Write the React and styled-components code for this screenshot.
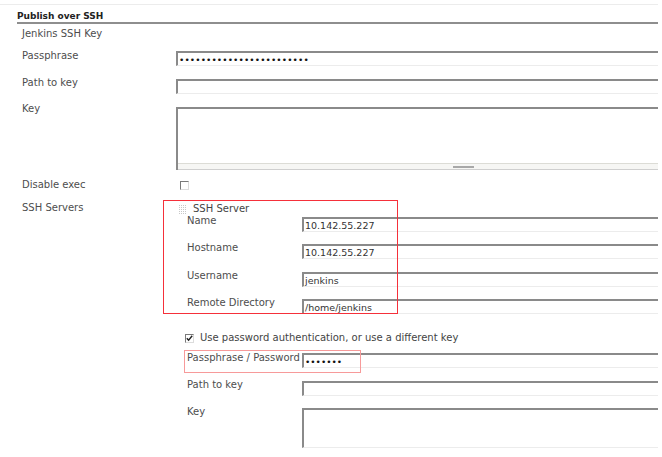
import React from "react";
import styled, { createGlobalStyle } from "styled-components";

const Global = createGlobalStyle`
  html, body { margin: 0; padding: 0; background: #fff; }
  body { font-family: "DejaVu Sans", Verdana, sans-serif; font-size: 10px; color: #444; }
`;

const Page = styled.div`
  position: relative;
  width: 662px;
  height: 457px;
  overflow: hidden;
  padding-top: 4px;
  box-sizing: border-box;
`;

const TopRule = styled.div`
  height: 1px;
  width: 658px;
  background: #ececec;
`;

const SectionTitle = styled.div`
  margin: 5px 4px 0 17px;
  height: 12px;
  line-height: 12px;
  font-size: 9px;
  font-weight: bold;
  color: #222;
  border-bottom: 2px solid #8e8e8e;
`;

const Form = styled.div`
  display: flex;
  flex-direction: column;
  padding-left: 22px;
  padding-right: 4px;
`;

const Row = styled.div`
  display: flex;
  align-items: flex-start;
  margin-top: ${(p) => p.$mt}px;
`;

const Label = styled.div`
  flex: 0 0 ${(p) => p.$w || 154}px;
  line-height: 12px;
  margin-top: ${(p) => p.$dy || 0}px;
  color: #4d4d4d;
  white-space: nowrap;
`;

const Field = styled.div`
  flex: 1;
  min-width: 0;
`;

const TextBox = styled.div`
  height: 15px;
  box-sizing: border-box;
  border-top: 2px solid #8a8a8a;
  border-left: 2px solid #8a8a8a;
  border-bottom: 1px solid #ececec;
  background: #fff;
  padding-left: 1px;
  line-height: 13px;
  font-size: 9.5px;
  color: #333;
  white-space: nowrap;
  overflow: hidden;
`;

const Dots = styled.span`
  font-size: 9px;
  letter-spacing: ${(p) => p.$ls}px;
  color: #111;
`;

const Area = styled.div`
  height: ${(p) => p.$h}px;
  box-sizing: border-box;
  border-top: 2px solid #8a8a8a;
  border-left: 2px solid #8a8a8a;
  border-bottom: ${(p) => (p.$scroll ? "none" : "1px solid #ececec")};
  display: flex;
  flex-direction: column;
  justify-content: flex-end;
`;

const ScrollStrip = styled.div`
  height: 7px;
  box-sizing: border-box;
  border-top: 1px solid #dcdcd6;
  border-bottom: 1px solid #cfcfcf;
  background: #f6f6f4;
  display: flex;
  align-items: center;
  padding-left: 275px;
`;

const Thumb = styled.div`
  width: 21px;
  height: 2px;
  background: #a8a8a8;
`;

const Check = styled.span`
  display: inline-flex;
  align-items: center;
  justify-content: center;
  width: 9px;
  height: 9px;
  box-sizing: border-box;
  border-top: 1px solid #7a7a7a;
  border-left: 1px solid #7a7a7a;
  border-right: 1px solid #dcdcdc;
  border-bottom: 1px solid #dcdcdc;
  background: #fff;
  margin-left: ${(p) => p.$ml || 0}px;
  margin-top: ${(p) => p.$mt || 0}px;
  flex: 0 0 auto;
`;

const Nested = styled.div`
  display: flex;
  flex-direction: column;
  margin-top: 2px;
`;

const BlockHead = styled.div`
  display: flex;
  align-items: center;
  padding-left: 3px;
  height: 12px;
  line-height: 12px;
  gap: 6px;
  color: #444;
`;

const SubRow = styled.div`
  display: flex;
  align-items: flex-start;
  margin-top: ${(p) => p.$mt}px;
  padding-left: 11px;
`;

const CheckRow = styled.div`
  display: flex;
  align-items: center;
  gap: 6px;
  margin-top: ${(p) => p.$mt}px;
  line-height: 12px;
  color: #444;
`;

const Annotation = styled.div`
  position: absolute;
  left: ${(p) => p.$x}px;
  top: ${(p) => p.$y}px;
  width: ${(p) => p.$w}px;
  height: ${(p) => p.$h}px;
  box-sizing: border-box;
  border: 1px solid ${(p) => p.$c};
  pointer-events: none;
`;

const Grip = () => (
  <svg width="8" height="9" viewBox="0 0 8 9">
    {[0, 2, 4, 6].map((x) =>
      [0, 2, 4, 6, 8].map((y) => (
        <rect key={`${x}-${y}`} x={x} y={y} width="1" height="1" fill="#c8c8c8" />
      ))
    )}
  </svg>
);

const Tick = () => (
  <svg width="7" height="7" viewBox="0 0 7 7">
    <path d="M0.8 3.2 L2.6 5.2 L6.2 0.8" stroke="#222" strokeWidth="1.4" fill="none" />
  </svg>
);

export default function App() {
  return (
    <>
      <Global />
      <Page>
        <TopRule />
        <SectionTitle>Publish over SSH</SectionTitle>
        <Form>
          <Row $mt={4}>
            <Label>Jenkins SSH Key</Label>
          </Row>
          <Row $mt={11}>
            <Label $dy={-1}>Passphrase</Label>
            <Field>
              <TextBox>
                <Dots $ls={0.1}>{"•".repeat(24)}</Dots>
              </TextBox>
            </Field>
          </Row>
          <Row $mt={13}>
            <Label $dy={-2}>Path to key</Label>
            <Field>
              <TextBox />
            </Field>
          </Row>
          <Row $mt={13}>
            <Label $dy={-4}>Key</Label>
            <Field>
              <Area $h={63} $scroll>
                <ScrollStrip>
                  <Thumb />
                </ScrollStrip>
              </Area>
            </Field>
          </Row>
          <Row $mt={9}>
            <Label>Disable exec</Label>
            <Field>
              <Check $ml={4} $mt={2} />
            </Field>
          </Row>
          <Row $mt={9}>
            <Label $dy={1}>SSH Servers</Label>
            <Field>
              <Nested>
                <BlockHead>
                  <Grip />
                  <span>SSH Server</span>
                </BlockHead>
                {[
                  ["Name", "10.142.55.227", 2],
                  ["Hostname", "10.142.55.227", 12],
                  ["Username", "jenkins", 13],
                  ["Remote Directory", "/home/jenkins", 12],
                ].map(([l, v, mt]) => (
                  <SubRow key={l} $mt={mt}>
                    <Label $w={115} $dy={-2}>{l}</Label>
                    <Field>
                      <TextBox>{v}</TextBox>
                    </Field>
                  </SubRow>
                ))}
                <CheckRow $mt={18}>
                  <Check $ml={9}>
                    <Tick />
                  </Check>
                  <span>Use password authentication, or use a different key</span>
                </CheckRow>
                <SubRow $mt={9}>
                  <Label $w={115} $dy={-1}>Passphrase / Password</Label>
                  <Field>
                    <TextBox>
                      <Dots $ls={0}>{"•".repeat(7)}</Dots>
                    </TextBox>
                  </Field>
                </SubRow>
                <SubRow $mt={13}>
                  <Label $w={115} $dy={-2}>Path to key</Label>
                  <Field>
                    <TextBox />
                  </Field>
                </SubRow>
                <SubRow $mt={12}>
                  <Label $w={115} $dy={-2}>Key</Label>
                  <Field>
                    <Area $h={40} />
                  </Field>
                </SubRow>
              </Nested>
            </Field>
          </Row>
        </Form>
        <Annotation $x={163} $y={200} $w={235} $h={114} $c="#f5303a" />
        <Annotation $x={184} $y={350} $w={177} $h={23} $c="#f79a9a" />
      </Page>
    </>
  );
}
